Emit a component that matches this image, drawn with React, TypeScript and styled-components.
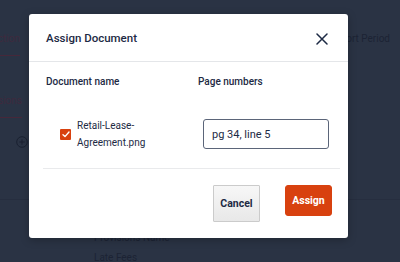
import styled, { createGlobalStyle } from "styled-components";

const GlobalStyle = createGlobalStyle`
  html, body {
    margin: 0;
    padding: 0;
    width: 400px;
    height: 262px;
    overflow: hidden;
    background: #2a3344;
    font-family: Roboto, "Liberation Sans", Arial, sans-serif;
  }
  * {
    box-sizing: border-box;
  }
`;

const Backdrop = styled.div`
  position: relative;
  width: 400px;
  height: 262px;
  background: #2a3344;
  overflow: hidden;
`;

const TopBar = styled.div`
  display: flex;
  justify-content: space-between;
  align-items: flex-start;
  height: 56px;
  padding-top: 31px;
`;

interface TabProps {
  readonly $width: number;
}

const Tab = styled.div<TabProps>`
  display: flex;
  justify-content: flex-end;
  width: ${(props) => props.$width}px;
  overflow: hidden;
  white-space: nowrap;
  font-size: 10px;
  line-height: 16px;
  color: #3e2a3e;
  padding-bottom: 8px;
  border-bottom: 1px solid #46283a;
`;

const PeriodLabel = styled.div`
  font-size: 10px;
  line-height: 16px;
  color: #1c2334;
  padding-right: 10px;
  white-space: nowrap;
`;

const SideNav = styled.div`
  display: flex;
  flex-direction: column;
  align-items: flex-start;
  padding-top: 37px;
  gap: 18px;
`;

const AddIcon = styled.svg`
  margin-left: 16px;
  color: #1a2131;
`;

const LowerRows = styled.div`
  margin-top: 51px;
  border-top: 1px solid #262e3f;
  padding: 31px 0 0 94px;
  display: flex;
  flex-direction: column;
  gap: 6px;
`;

const BackText = styled.div`
  font-size: 10px;
  line-height: 14px;
  color: #1c2334;
`;

const Overlay = styled.div`
  position: absolute;
  inset: 0;
  padding: 14px 0 0 29px;
`;

const Dialog = styled.div`
  width: 319px;
  background: #ffffff;
  border-radius: 3px;
  box-shadow: 0 2px 8px rgba(0, 0, 0, 0.25);
  color: #1d2a44;
`;

const Header = styled.div`
  display: flex;
  align-items: center;
  justify-content: space-between;
  height: 48px;
  padding: 0 20px 0 17px;
  border-bottom: 1px solid #e4e6e9;
`;

const Title = styled.h2`
  margin: 1px 0 0;
  font-size: 11.5px;
  font-weight: 500;
  color: #1d2a44;
`;

const CloseButton = styled.button`
  display: flex;
  border: none;
  background: none;
  padding: 0;
  margin-top: 2px;
  color: #1d2a44;
  cursor: pointer;
`;

const Table = styled.div`
  margin: 0 8px 0 14px;
  padding-top: 13px;
`;

const HeadRow = styled.div`
  display: grid;
  grid-template-columns: 152px 1fr;
  padding-left: 3px;
`;

const HeadCell = styled.div`
  font-size: 10px;
  line-height: 14px;
  font-weight: 500;
  color: #1d2a44;
`;

const DocRow = styled.div`
  display: grid;
  grid-template-columns: 155px 1fr;
  align-items: center;
  margin-top: 28px;
  padding-bottom: 17px;
  border-bottom: 1px solid #e9eaec;
`;

const DocCell = styled.label`
  display: flex;
  align-items: center;
  gap: 6px;
  padding-left: 17px;
`;

const Checkbox = styled.span`
  display: flex;
  align-items: center;
  justify-content: center;
  flex: none;
  width: 11px;
  height: 11px;
  border-radius: 1px;
  background: #d8410f;
  color: #ffffff;
`;

const DocName = styled.span`
  font-size: 10px;
  line-height: 17px;
  color: #1d2a44;
`;

const PageInput = styled.input`
  width: 126px;
  height: 30px;
  margin-left: 5px;
  padding: 0 8px;
  border: 1.5px solid #5b6579;
  border-radius: 3px;
  font-family: inherit;
  font-size: 11px;
  color: #1d2a44;
  outline: none;
`;

const Footer = styled.div`
  display: flex;
  justify-content: flex-end;
  align-items: flex-start;
  gap: 25px;
  padding: 16px 16px 16px 0;
`;

interface ButtonProps {
  readonly $primary?: boolean;
}

const Button = styled.button<ButtonProps>`
  width: 47px;
  height: ${(props) => (props.$primary ? 31 : 37)}px;
  padding: 0;
  font-family: inherit;
  font-size: 10.5px;
  font-weight: 700;
  border-radius: ${(props) => (props.$primary ? 3 : 1)}px;
  border: 1px solid ${(props) => (props.$primary ? "#d8410f" : "#cbcbcb")};
  background: ${(props) =>
    props.$primary ? "#d8410f" : "linear-gradient(#f7f7f7, #e8e8e8)"};
  color: ${(props) => (props.$primary ? "#ffffff" : "#1d2a44")};
  cursor: pointer;
`;

export default function App() {
  return (
    <>
      <GlobalStyle />
      <Backdrop>
        <TopBar>
          <Tab $width={20}>Abstraction</Tab>
          <PeriodLabel>Report Period</PeriodLabel>
        </TopBar>
        <SideNav>
          <Tab $width={22}>Provisions</Tab>
          <AddIcon width="12" height="12" viewBox="0 0 12 12" fill="none">
            <circle cx="6" cy="6" r="5.3" stroke="currentColor" strokeWidth="1" />
            <path d="M6 3.3v5.4M3.3 6h5.4" stroke="currentColor" strokeWidth="1" />
          </AddIcon>
        </SideNav>
        <LowerRows>
          <BackText>Provisions Name</BackText>
          <BackText>Late Fees</BackText>
        </LowerRows>
        <Overlay>
          <Dialog role="dialog" aria-label="Assign Document">
            <Header>
              <Title>Assign Document</Title>
              <CloseButton aria-label="Close">
                <svg width="12" height="12" viewBox="0 0 12 12" fill="none">
                  <path
                    d="M1 1l10 10M11 1L1 11"
                    stroke="currentColor"
                    strokeWidth="1.5"
                    strokeLinecap="round"
                  />
                </svg>
              </CloseButton>
            </Header>
            <Table>
              <HeadRow>
                <HeadCell>Document name</HeadCell>
                <HeadCell>Page numbers</HeadCell>
              </HeadRow>
              <DocRow>
                <DocCell>
                  <Checkbox>
                    <svg width="8" height="7" viewBox="0 0 8 7" fill="none">
                      <path
                        d="M1 3.8l2 1.8L7 1"
                        stroke="currentColor"
                        strokeWidth="1.4"
                        strokeLinecap="round"
                        strokeLinejoin="round"
                      />
                    </svg>
                  </Checkbox>
                  <DocName>
                    Retail-Lease-
                    <br />
                    Agreement.png
                  </DocName>
                </DocCell>
                <PageInput defaultValue="pg 34, line 5" />
              </DocRow>
            </Table>
            <Footer>
              <Button>Cancel</Button>
              <Button $primary>Assign</Button>
            </Footer>
          </Dialog>
        </Overlay>
      </Backdrop>
    </>
  );
}
